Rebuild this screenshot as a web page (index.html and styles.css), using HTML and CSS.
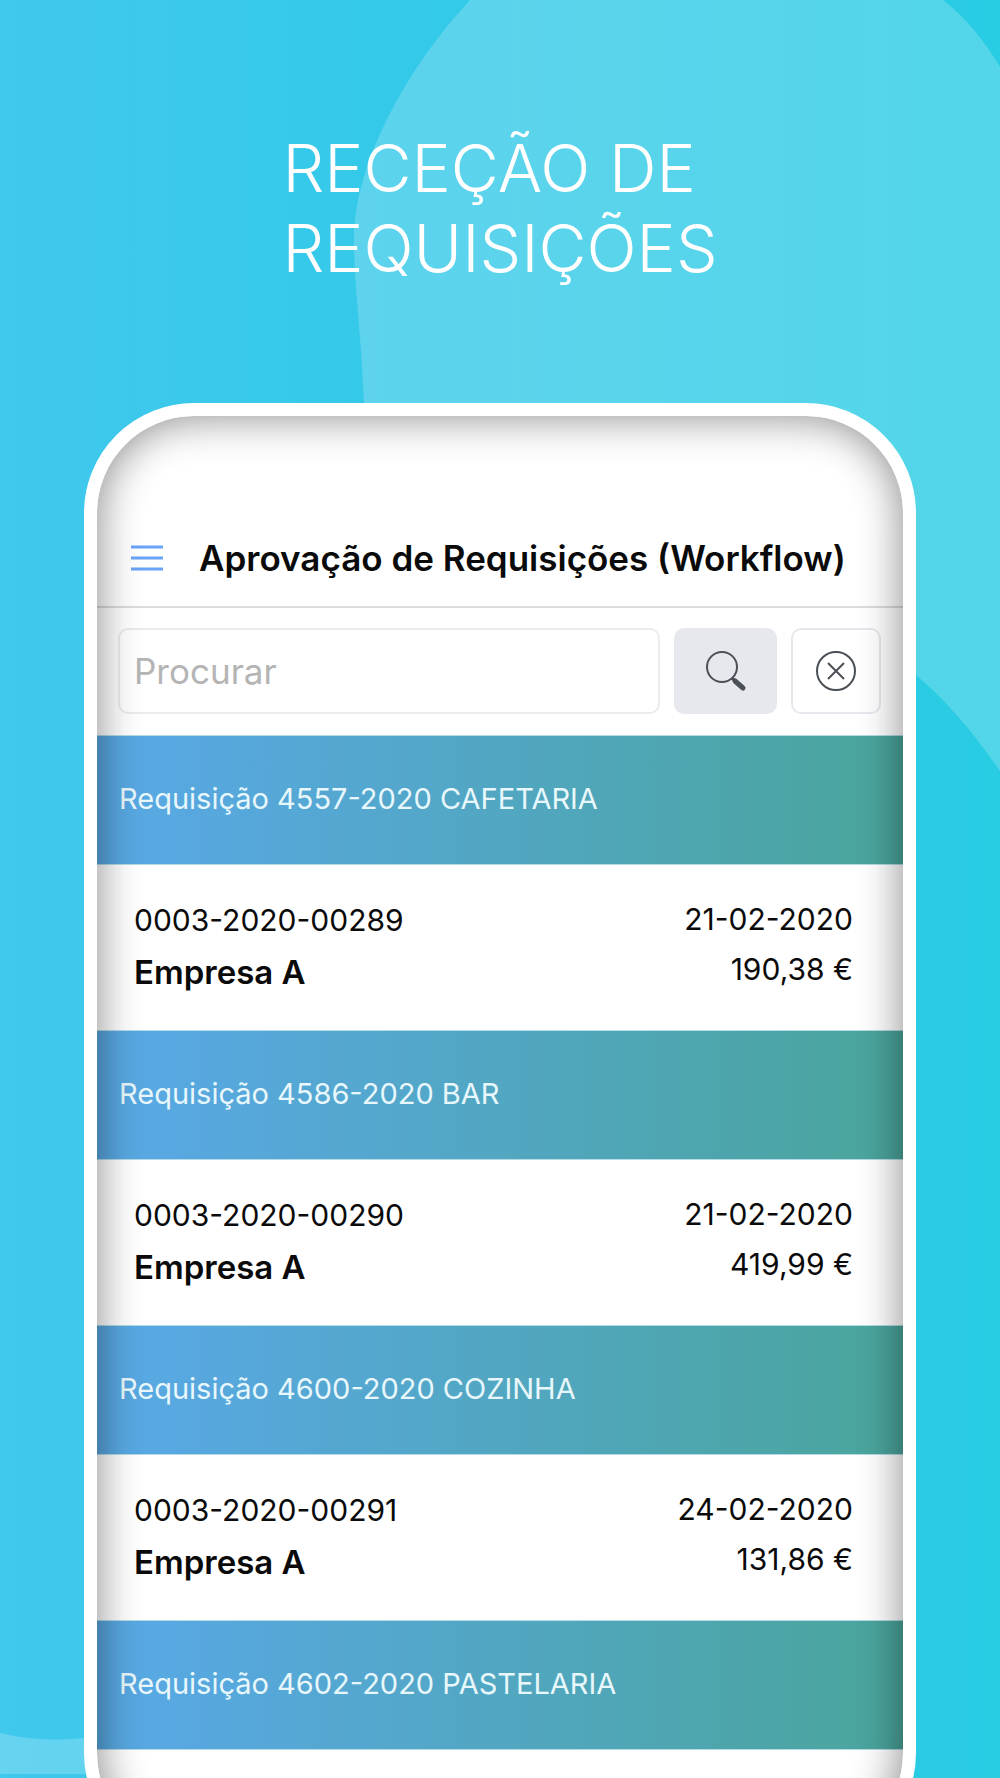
FILE: index.html
```html
<!DOCTYPE html>
<html lang="pt">
<head>
    <meta charset="UTF-8">
    <meta name="viewport" content="width=device-width, initial-scale=1.0">
    <title>Receção de Requisições</title>
    <link rel="stylesheet" href="styles.css">
</head>
<body>

<div class="scene">
    <!-- Background shapes -->
    <svg class="backdrop" viewBox="0 0 1000 1778" preserveAspectRatio="none" aria-hidden="true">
        <path d="M470 0C405 70 354 165 354 240C354 285 361 330 364 403L380 600L800 600L916 675C948 702 975 735 1000 771V67C984 40 966 18 943 0Z"/>
        <path d="M0 1733Q42 1743 84 1738L140 1730V1774H0Z"/>
    </svg>

    <h1 class="headline">RECEÇÃO DE<br>REQUISIÇÕES</h1>

    <main class="phone">
        <header class="topbar">
            <button type="button" class="menu" aria-label="Menu">
                <svg width="32" height="26" viewBox="0 0 32 26">
                    <path d="M0 2H32M0 13H32M0 24H32" stroke="#6aa3f7" stroke-width="3"/>
                </svg>
            </button>
            <h2 class="title">Aprovação de Requisições (Workflow)</h2>
        </header>

        <form class="search">
            <input type="text" class="search-input" placeholder="Procurar" aria-label="Procurar">
            <button type="button" class="btn btn-search" aria-label="Pesquisar">
                <svg width="42" height="42" viewBox="0 0 42 42" fill="none" stroke="#4b5056">
                    <circle cx="17" cy="17" r="15" stroke-width="2"/>
                    <path d="M27 28L30 31" stroke-width="3"/>
                    <path d="M30 31L38 38" stroke-width="5" stroke-linecap="round"/>
                </svg>
            </button>
            <button type="button" class="btn btn-clear" aria-label="Limpar">
                <svg width="42" height="42" viewBox="0 0 42 42" fill="none" stroke="#4b5056" stroke-width="2">
                    <circle cx="21" cy="21" r="19"/>
                    <path d="M13 13L29 29M29 13L13 29"/>
                </svg>
            </button>
        </form>

        <section class="group">
            <h3 class="group-title">Requisição 4557-2020 CAFETARIA</h3>
            <div class="item">
                <div class="item-main">
                    <span>0003-2020-00289</span>
                    <strong>Empresa A</strong>
                </div>
                <div class="item-side">
                    <span>21-02-2020</span>
                    <span>190,38 €</span>
                </div>
            </div>
        </section>

        <section class="group">
            <h3 class="group-title">Requisição 4586-2020 BAR</h3>
            <div class="item">
                <div class="item-main">
                    <span>0003-2020-00290</span>
                    <strong>Empresa A</strong>
                </div>
                <div class="item-side">
                    <span>21-02-2020</span>
                    <span>419,99 €</span>
                </div>
            </div>
        </section>

        <section class="group">
            <h3 class="group-title">Requisição 4600-2020 COZINHA</h3>
            <div class="item">
                <div class="item-main">
                    <span>0003-2020-00291</span>
                    <strong>Empresa A</strong>
                </div>
                <div class="item-side">
                    <span>24-02-2020</span>
                    <span>131,86 €</span>
                </div>
            </div>
        </section>

        <section class="group">
            <h3 class="group-title">Requisição 4602-2020 PASTELARIA</h3>
        </section>
    </main>
</div>

</body>
</html>
```

FILE: styles.css
```css
* {
    box-sizing: border-box;
}

body {
    margin: 0;
    font-family: Inter, "Liberation Sans", sans-serif;
    color: #0a0a0a;
}

.scene {
    position: relative;
    height: 100vh;
    overflow: hidden;
    padding: 128px 84px 0;
    background: linear-gradient(to right, #40c8ed, #34c9e9 40%, #28cce3);
}

.backdrop {
    position: absolute;
    top: 0;
    left: 0;
    width: 100%;
    height: 100%;
    fill: rgba(255, 255, 255, 0.2);
}

.headline {
    position: relative;
    width: fit-content;
    margin: 0 auto 115px;
    font-size: 66px;
    font-weight: 300;
    line-height: 80px;
    color: #fff;
}

.phone {
    position: relative;
    overflow: hidden;
    padding-bottom: 100px;
    border: 13px solid #fff;
    border-radius: 110px;
    background: #fff;
}

/* inner shadow, drawn over the content */
.phone::after {
    content: "";
    position: absolute;
    inset: 0;
    border-radius: 97px;
    box-shadow: inset 0 0 44px rgba(0, 0, 0, 0.48);
    pointer-events: none;
}

.topbar {
    display: flex;
    align-items: center;
    gap: 36px;
    height: 192px;
    padding: 94px 34px 0;
    border-bottom: 2px solid #dcdcdc;
}

.menu {
    display: flex;
    padding: 0;
    border: 0;
    background: none;
}

.title {
    margin: 0;
    font-size: 35px;
    font-weight: 600;
    line-height: 44px;
    white-space: nowrap;
}

.search {
    display: flex;
    gap: 14px;
    padding: 20px 22px 21px 21px;
}

.search-input {
    flex: 1;
    min-width: 0;
    height: 86px;
    padding: 0 14px;
    border: 2px solid #ececee;
    border-radius: 10px;
    font: 35px Inter, "Liberation Sans", sans-serif;
    background: none;
}

.search-input::placeholder {
    color: #b4b4b4;
}

.btn {
    display: flex;
    align-items: center;
    justify-content: center;
    height: 86px;
    padding: 0;
    border: 2px solid #e6e8ee;
    border-radius: 10px;
    background: none;
}

.btn-search {
    width: 103px;
    background: #e6e8ee;
}

.btn-clear {
    width: 90px;
}

.group-title {
    margin: 0;
    padding: 41px 22px 43px;
    border-top: 1px solid #b5dbe6;
    border-bottom: 1px solid #b5dbe6;
    background: linear-gradient(to right, #58a8e2, #58a8e2 8%, #4aa59b);
    font-size: 29px;
    font-weight: 400;
    line-height: 44px;
    color: #e8f7fb;
}

.item {
    display: flex;
    justify-content: space-between;
    padding: 29px 50px 32px 37px;
    font-size: 30px;
}

.item-main,
.item-side {
    display: flex;
    flex-direction: column;
}

.item-main {
    line-height: 52px;
}

.item-main strong {
    font-size: 33px;
    font-weight: 600;
}

.item-side {
    line-height: 50px;
    text-align: right;
}
```
